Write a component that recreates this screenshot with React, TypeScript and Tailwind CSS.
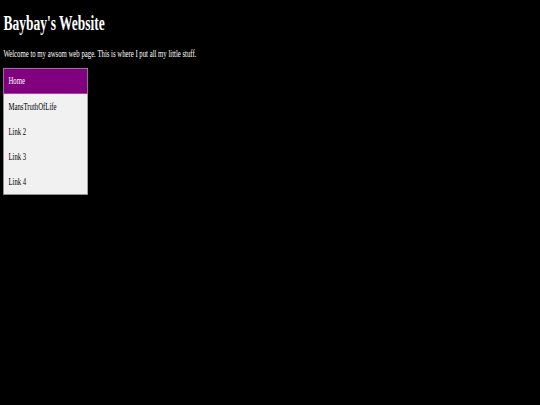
import React from "react";

const items = ["Home", "MansTruthOfLife", "Link 2", "Link 3", "Link 4"];

export default function App() {
  return (
    <div className="w-[540px] h-[405px] bg-black overflow-hidden">
      <div
        className="flow-root w-[1280px] origin-top-left scale-x-[0.4219] scale-y-[0.66] pl-[8px] text-white"
        style={{ fontFamily: '"Liberation Serif", "Times New Roman", serif' }}
      >
        <h1 className="mt-[16px] text-[32px] leading-[37px] font-bold">Baybay's Website</h1>
        <p className="mt-[20px] text-[16px] leading-[18px]">
          Welcome to my awsom web page. This is where I put all my little stuff.
        </p>
        <ul className="mt-[12px] w-[200px] border border-[#888] bg-[#f1f1f1]">
          {items.map((t, i) => (
            <li
              key={t}
              className={
                i === 0
                  ? "h-[38px] px-[11px] py-[10px] text-[16px] leading-[18px] bg-[#800080] text-white"
                  : "h-[38px] px-[11px] py-[10px] text-[16px] leading-[18px] text-black"
              }
            >
              {t}
            </li>
          ))}
        </ul>
      </div>
    </div>
  );
}
